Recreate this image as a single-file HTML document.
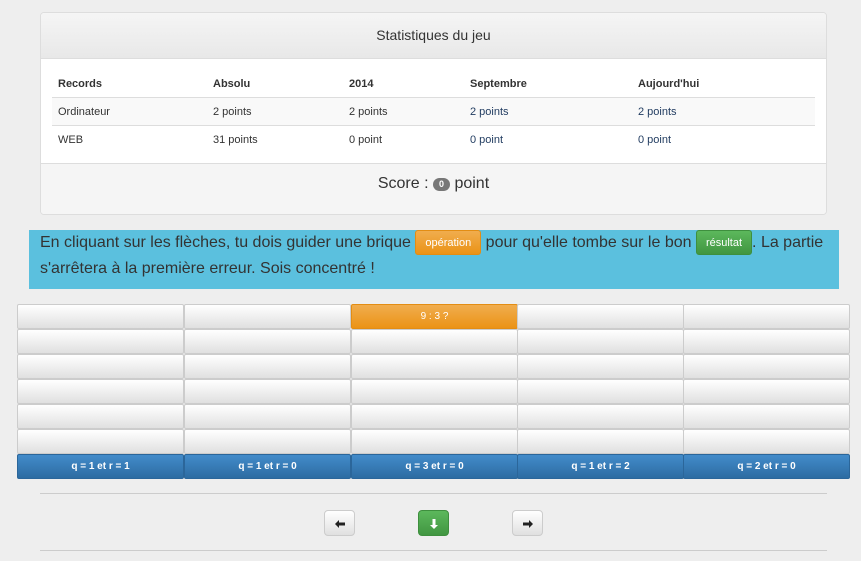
<!DOCTYPE html>
<html><head><meta charset="utf-8"><style>
*{box-sizing:border-box;margin:0;padding:0}
body{width:861px;height:561px;background:#eeeeee;font-family:"Liberation Sans",sans-serif;color:#333;position:relative;overflow:hidden}
.abs{position:absolute}
.panel{left:40px;top:12px;width:787px;height:203px;border:1px solid #ddd;border-radius:4px;background:#fff;overflow:hidden}
.ph{position:absolute;left:0;top:0;right:0;height:46px;background:linear-gradient(#f5f5f5,#e8e8e8);border-bottom:1px solid #ddd;text-align:center;line-height:45px;font-size:14px}
.pf{position:absolute;left:0;bottom:0;right:0;height:51px;background:#f5f5f5;border-top:1px solid #ddd;text-align:center;font-size:16px;padding-top:11px}
.badge{display:inline-block;background:#777;color:#fff;font-size:9px;font-weight:bold;border-radius:8px;width:17px;height:13px;line-height:13px;text-align:center;vertical-align:1px}
.t{font-size:11px;position:absolute}
.row{position:absolute;left:11px;width:763px}
.info{left:29px;top:230px;width:810px;height:59px;background:#5bc0de;font-size:16px;line-height:26px;padding:0 11px;color:#333}
.lab{display:inline-block;font-size:11px;color:#fff;border-radius:3px;padding:0 9px;height:25px;line-height:25px;vertical-align:1px}
.cell{position:absolute;width:167px;height:25px;border:1px solid #ccc;background:linear-gradient(#fff,#e0e0e0);border-radius:2px}
.blue{background:linear-gradient(#428bca,#2d6ca2);border:1px solid #2b669a;color:#fff;font-size:10px;font-weight:bold;text-align:center;line-height:23px}
.btn{position:absolute;top:510px;width:31px;height:26px;border:1px solid #ccc;border-radius:4px;background:linear-gradient(#fff,#e0e0e0)}
.btn svg{position:absolute;left:9px;top:7px}
</style></head><body>
<div class="abs panel">
 <div class="ph">Statistiques du jeu</div>
 <div class="row" style="top:84px;height:29px;background:#f9f9f9;border-top:1px solid #ddd;border-bottom:1px solid #ddd"></div>
 <div class="t" style="left:17px;top:65px;font-weight:bold">Records</div>
 <div class="t" style="left:172px;top:65px;font-weight:bold">Absolu</div>
 <div class="t" style="left:308px;top:65px;font-weight:bold">2014</div>
 <div class="t" style="left:429px;top:65px;font-weight:bold">Septembre</div>
 <div class="t" style="left:597px;top:65px;font-weight:bold">Aujourd'hui</div>
 <div class="t" style="left:17px;top:93px">Ordinateur</div>
 <div class="t" style="left:172px;top:93px">2 points</div>
 <div class="t" style="left:308px;top:93px">2 points</div>
 <div class="t" style="left:429px;top:93px;color:#1f3a5f">2 points</div>
 <div class="t" style="left:597px;top:93px;color:#1f3a5f">2 points</div>
 <div class="t" style="left:17px;top:121px">WEB</div>
 <div class="t" style="left:172px;top:121px">31 points</div>
 <div class="t" style="left:308px;top:121px">0 point</div>
 <div class="t" style="left:429px;top:121px;color:#1f3a5f">0 point</div>
 <div class="t" style="left:597px;top:121px;color:#1f3a5f">0 point</div>
 <div class="pf">Score : <span class="badge">0</span> point</div>
</div>
<div class="abs info">En cliquant sur les flèches, tu dois guider une brique <span class="lab" style="background:linear-gradient(#f0ad4e,#eb9316);border:1px solid #e38d13">opération</span> pour qu'elle tombe sur le bon <span class="lab" style="background:linear-gradient(#5cb85c,#419641);border:1px solid #3e8f3e">résultat</span>. La partie s'arrêtera à la première erreur. Sois concentré !</div>
<div id="grid"></div>
<script>
var xs=[17,184,351,517,683],h='';
var lbl=['q = 1 et r = 1','q = 1 et r = 0','q = 3 et r = 0','q = 1 et r = 2','q = 2 et r = 0'];
for(var r=0;r<6;r++)for(var c=0;c<5;c++){
 var st='left:'+xs[c]+'px;top:'+(304+r*25)+'px';
 if(r==0&&c==2)h+='<div class="cell" style="'+st+';background:linear-gradient(#f0ad4e,#eb9316);border-color:#e38d13;color:#fff;font-size:10px;text-align:center;line-height:23px">9 : 3 ?</div>';
 else h+='<div class="cell" style="'+st+'"></div>';}
for(var c=0;c<5;c++)h+='<div class="cell blue" style="left:'+xs[c]+'px;top:454px">'+lbl[c]+'</div>';
document.getElementById('grid').innerHTML=h;
</script>
<div class="abs" style="left:40px;top:493px;width:787px;border-top:1px solid #ccc"></div>
<div class="abs" style="left:40px;top:550px;width:787px;border-top:1px solid #ccc"></div>
<div class="btn" style="left:324px"><svg width="12" height="12" viewBox="0 0 12 12"><path d="M1 6 L5 2 L5 4.5 L11 4.5 L11 7.5 L5 7.5 L5 10 Z" fill="#222"/></svg></div>
<div class="btn" style="left:418px;background:linear-gradient(#5cb85c,#419641);border-color:#3e8f3e"><svg width="12" height="12" viewBox="0 0 12 12"><path d="M6 11 L2 7 L4.5 7 L4.5 1 L7.5 1 L7.5 7 L10 7 Z" fill="#fff"/></svg></div>
<div class="btn" style="left:512px"><svg width="12" height="12" viewBox="0 0 12 12"><path d="M11 6 L7 2 L7 4.5 L1 4.5 L1 7.5 L7 7.5 L7 10 Z" fill="#222"/></svg></div>
</body></html>
